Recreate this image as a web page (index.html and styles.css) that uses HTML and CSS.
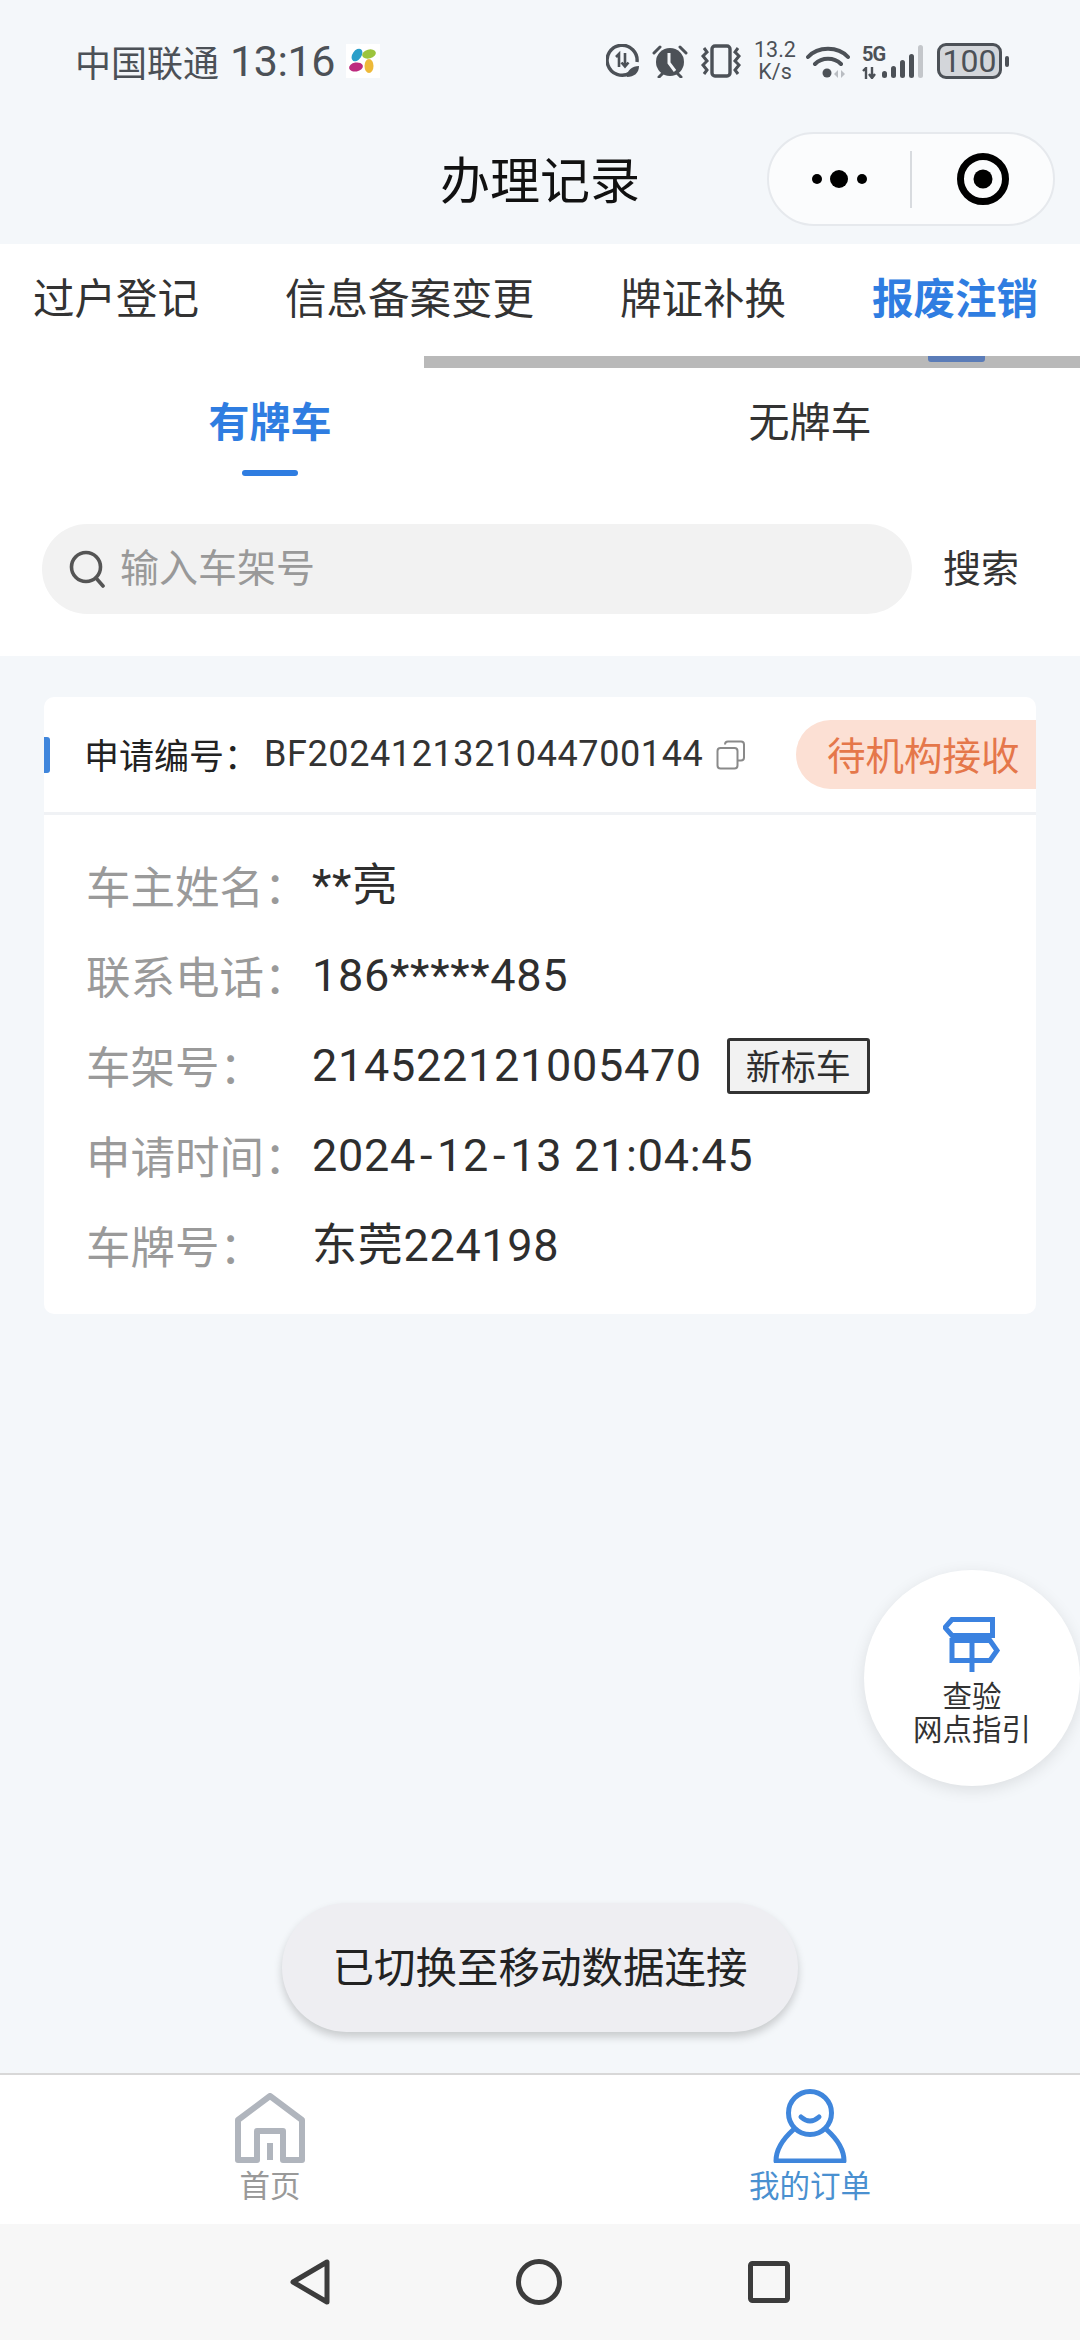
FILE: index.html
```html
<!DOCTYPE html>
<html lang="zh">
<head>
<meta charset="utf-8">
<title>办理记录</title>
<link rel="stylesheet" href="styles.css">
</head>
<body>
<div class="page">
  <header class="status">
    <div class="status-left">
      <span class="carrier">中国联通</span>
      <span class="time">13:16</span>
      <svg class="app-logo" viewBox="0 0 34 34">
        <rect width="34" height="34" fill="#fff"/>
        <ellipse cx="11" cy="11" rx="4.5" ry="7" transform="rotate(35 11 11)" fill="#2b9fc9"/>
        <ellipse cx="23" cy="10" rx="7" ry="4.5" transform="rotate(-15 23 10)" fill="#9cc43c"/>
        <ellipse cx="10" cy="23" rx="7" ry="4.5" transform="rotate(-10 10 23)" fill="#bd2a7e"/>
        <ellipse cx="23" cy="22" rx="4.5" ry="7" fill="#eeb938"/>
      </svg>
    </div>
    <div class="status-right">
      <svg class="ic-data" viewBox="0 0 34 34" fill="none" stroke="#4c5157">
        <path d="M24 29A15 15 0 1 1 31 18" stroke-width="3.4"/>
        <path d="M10 13l3-3v13M19 9v13M15.500 18.500l3.500 4 3.500-4" stroke-width="2.600"/>
        <path d="M21 33c0-7 5-11 12-11 0 7-5 11-12 11z" fill="#4c5157" stroke="none"/>
      </svg>
      <svg class="ic-alarm" viewBox="0 0 36 34" fill="none">
        <circle cx="18" cy="18" r="14" fill="#4c5157"/>
        <path d="M17 9v10l6 8" stroke="#f4f7fa" stroke-width="3"/>
        <path d="M2 9l6-6M34 9l-6-6M7 33l4-4M29 33l-4-4" stroke="#4c5157" stroke-width="3" stroke-linecap="round"/>
      </svg>
      <svg class="ic-vibrate" viewBox="0 0 42 34" fill="none" stroke="#4c5157">
        <rect x="12" y="2" width="18" height="30" rx="3" stroke-width="3.400"/>
        <path d="M4 4l3 4-4 4 4 5-4 4 4 5-3 4M38 4l-3 4 4 4-4 5 4 4-4 5 3 4" stroke-width="3"/>
      </svg>
      <div class="speed"><span>13.2</span><span>K/s</span></div>
      <svg class="ic-wifi" viewBox="0 0 44 34" fill="none" stroke="#4c5157" stroke-width="4" stroke-linecap="round">
        <path d="M2 13C12 2 32 2 42 13M9 20c7-7 19-7 26 0"/>
        <circle cx="21" cy="29" r="4.500" fill="#4c5157" stroke="none"/>
        <path d="M28 30l4-4v8zM35 26l4 4-4 4z" fill="#b9bdc2" stroke="none"/>
      </svg>
      <div class="cell">
        <div class="cell-left">
          <span class="five-g">5G</span>
          <svg class="ic-arrows" viewBox="0 0 15 12" fill="none" stroke="#4c5157" stroke-width="2.400"><path d="M1 4l3-3v11M10 0v11M7 7l3 4 3-4"/></svg>
        </div>
        <svg class="ic-bars" viewBox="0 0 41 34">
          <rect x="0" y="26" width="5" height="7" rx="2.500" fill="#4c5157"/>
          <rect x="9" y="21" width="5" height="12" rx="2.500" fill="#4c5157"/>
          <rect x="18" y="15" width="5" height="18" rx="2.500" fill="#4c5157"/>
          <rect x="27" y="9" width="5" height="24" rx="2.500" fill="#4c5157"/>
          <rect x="36" y="0" width="5" height="33" rx="2.500" fill="#c4c7cb"/>
        </svg>
      </div>
      <div class="battery"><span class="battery-body">100</span><span class="battery-nub"></span></div>
    </div>
  </header>

  <nav class="nav">
    <span></span>
    <h1 class="nav-title">办理记录</h1>
    <div class="capsule">
      <div class="capsule-side">
        <svg class="ic-dots" viewBox="0 0 56 18"><circle cx="5" cy="9" r="5"/><circle cx="27" cy="9" r="9"/><circle cx="50" cy="9" r="5"/></svg>
      </div>
      <span class="capsule-line"></span>
      <div class="capsule-side">
        <svg class="ic-target" viewBox="0 0 52 52"><circle cx="26" cy="26" r="22.500" fill="none" stroke="#000" stroke-width="7"/><circle cx="26" cy="26" r="9.500"/></svg>
      </div>
    </div>
  </nav>

  <section class="top">
    <div class="tabs">
      <span>过户登记</span>
      <span>信息备案变更</span>
      <span>牌证补换</span>
      <span class="tab-on">报废注销</span>
    </div>
    <div class="scrollbar"><span class="scroll-thumb"></span></div>
    <div class="subtabs">
      <div class="subtab subtab-on"><span>有牌车</span><i class="subtab-line"></i></div>
      <div class="subtab"><span>无牌车</span></div>
    </div>
    <div class="search-row">
      <div class="search-box">
        <svg class="ic-search" viewBox="0 0 38 38" fill="none" stroke="#555" stroke-width="3.600"><circle cx="18" cy="17" r="14.500"/><path d="M28 28l7 8" stroke-linecap="round"/></svg>
        <span class="placeholder">输入车架号</span>
      </div>
      <span class="search-btn">搜索</span>
    </div>
  </section>

  <main class="main">
    <article class="card">
      <div class="card-head">
        <i class="marker"></i>
        <span class="no-label">申请编号：</span>
        <span class="no-value">BF2024121321044700144</span>
        <svg class="ic-copy" viewBox="0 0 30 30" fill="none" stroke="#8a8a8a" stroke-width="2"><rect x="1.500" y="8" width="20" height="20.500" rx="3"/><path d="M9 4.500c0-2 1-3 3-3h13c2 0 3 1 3 3v13c0 2-1 3-3 3h-3"/></svg>
        <span class="pill">待机构接收</span>
      </div>
      <dl class="rows">
        <div class="row"><dt>车主姓名：</dt><dd>**亮</dd></div>
        <div class="row"><dt>联系电话：</dt><dd>186*****485</dd></div>
        <div class="row"><dt>车架号：</dt><dd>214522121005470<span class="tag">新标车</span></dd></div>
        <div class="row"><dt>申请时间：</dt><dd>2024<span class="dash">-</span>12<span class="dash">-</span>13 21:04:45</dd></div>
        <div class="row"><dt>车牌号：</dt><dd>东莞224198</dd></div>
      </dl>
    </article>

    <div class="float">
      <svg class="ic-sign" viewBox="0 0 58 55" fill="none" stroke="#3b82e0" stroke-width="5">
        <path d="M9 2.500H49.500V18.500H9L2 10.500z"/>
        <path d="M9 23.500H47L54 33.500 47 43.500H9z"/>
        <path d="M29 19V55"/>
      </svg>
      <span>查验</span>
      <span>网点指引</span>
    </div>

    <div class="toast">已切换至移动数据连接</div>
  </main>

  <footer class="tabbar">
    <div class="bar-item">
      <svg class="ic-home" viewBox="0 0 70 70" fill="none" stroke="#b0b5bd" stroke-width="6" stroke-linejoin="round"><path d="M3 27V67H22V38H48V67H67V27L35 3z"/><path d="M35 50V67"/></svg>
      <span>首页</span>
    </div>
    <div class="bar-item bar-on">
      <svg class="ic-person" viewBox="0 0 74 74" fill="none" stroke="#3f86dc" stroke-width="5" stroke-linecap="round" stroke-linejoin="round"><circle cx="37" cy="24" r="21.500"/><path d="M28 28Q37 36 46 28"/><path d="M20 41C10 50 3 60 3 72H71C71 60 64 50 54 41"/></svg>
      <span>我的订单</span>
    </div>
  </footer>

  <div class="sysnav">
    <svg class="ic-back" viewBox="0 0 40 46" fill="none" stroke="#3c3c3c" stroke-width="5" stroke-linejoin="round"><path d="M37 3V43L3 23z"/></svg>
    <svg class="ic-circle" viewBox="0 0 46 46" fill="none" stroke="#3c3c3c" stroke-width="5"><circle cx="23" cy="23" r="20.500"/></svg>
    <svg class="ic-square" viewBox="0 0 42 42" fill="none" stroke="#3c3c3c" stroke-width="5" stroke-linejoin="round"><rect x="2.500" y="2.500" width="37" height="37" rx="2"/></svg>
  </div>
</div>
</body>
</html>
```
FILE: styles.css
```css
* { box-sizing: border-box; margin: 0; padding: 0; }
html, body { width: 1080px; height: 2340px; overflow: hidden; }
body { background: #f4f7fa; font-family: "Noto Sans CJK SC", sans-serif; color: #333; }
i { display: block; }
svg { display: block; flex: none; }

.page { width: 1080px; height: 2340px; display: flex; flex-direction: column; }

/* status bar */
.status { height: 122px; flex: none; display: flex; justify-content: space-between; align-items: center; padding: 0 71px 0 75px; color: #4c5157; }
.status-left { display: flex; align-items: center; }
.carrier { font-size: 36px; line-height: 44px; }
.time { font-family: Roboto, sans-serif; font-size: 43px; line-height: 44px; margin-left: 11px; letter-spacing: -.4px; }
.app-logo { width: 34px; height: 34px; margin-left: 11px; }
.status-right { display: flex; align-items: center; }
.ic-data { width: 34px; height: 34px; }
.ic-alarm { width: 36px; height: 34px; margin-left: 12px; }
.ic-vibrate { width: 42px; height: 34px; margin-left: 12px; }
.speed { display: flex; flex-direction: column; align-items: center; width: 42px; margin-left: 12px; font-family: Roboto, sans-serif; font-size: 21.500px; line-height: 22px; }
.ic-wifi { width: 44px; height: 34px; margin-left: 10px; }
.cell { display: flex; align-items: flex-end; margin-left: 12px; height: 36px; }
.cell-left { display: flex; flex-direction: column; width: 24px; }
.five-g { font-family: Roboto, sans-serif; font-weight: 700; font-size: 20px; line-height: 20px; letter-spacing: -1px; }
.ic-arrows { width: 15px; height: 12px; margin-top: 3px; }
.ic-bars { width: 41px; height: 34px; margin-left: -4px; }
.battery { display: flex; align-items: center; margin-left: 14px; }
.battery-body { width: 65px; height: 36px; border: 3px solid #4c5157; border-radius: 9px; background: #d3d6da; font-family: Roboto, sans-serif; font-size: 32px; line-height: 30px; text-align: center; }
.battery-nub { width: 4px; height: 11px; margin-left: 3px; border-radius: 2px; background: #4c5157; }

/* nav */
.nav { height: 122px; flex: none; display: grid; grid-template-columns: 1fr auto 1fr; align-items: center; padding: 0 25px 8px; }
.nav-title { font-size: 50px; line-height: 66px; font-weight: 400; color: #111; padding-bottom: 5px; }
.capsule { justify-self: end; width: 288px; height: 94px; display: flex; align-items: center; border: 2px solid #e6e9ed; border-radius: 47px; background: #fbfcfd; }
.capsule-side { flex: 1; display: flex; justify-content: center; align-items: center; }
.capsule-line { width: 2px; height: 57px; background: #d8dbdf; }
.ic-dots { width: 56px; height: 18px; }
.ic-target { width: 52px; height: 52px; }

/* top */
.top { flex: none; background: #fff; padding-bottom: 42px; }
.tabs { height: 112px; display: flex; align-items: center; gap: 86px; padding: 0 0 8px 33px; font-size: 41.500px; line-height: 54px; white-space: nowrap; }
.tab-on { color: #2f7de1; font-weight: 700; }
.scrollbar { height: 12px; margin-left: 424px; background: #b9b9b9; }
.scroll-thumb { display: block; width: 57px; height: 6px; margin-left: 504px; border-radius: 0 0 3px 3px; background: #5b7cb8; }
.subtabs { display: grid; grid-template-columns: 1fr 1fr; height: 108px; padding-top: 27px; font-size: 41px; line-height: 48px; }
.subtab { display: flex; flex-direction: column; align-items: center; }
.subtab-on { color: #2f7de1; font-weight: 700; }
.subtab-line { width: 56px; height: 6px; margin-top: 27px; border-radius: 3px; background: #2f7de1; }
.search-row { display: flex; align-items: center; margin-top: 48px; padding-left: 42px; }
.search-box { width: 870px; height: 90px; display: flex; align-items: center; gap: 14px; padding-left: 26px; border-radius: 45px; background: #f2f2f2; }
.ic-search { width: 38px; height: 38px; }
.placeholder { font-size: 39px; line-height: 50px; color: #999; padding-bottom: 8px; }
.search-btn { margin-left: 31px; font-size: 38px; line-height: 50px; color: #333; padding-bottom: 6px; }

/* main */
.main { flex: 1; position: relative; padding: 41px 44px 0; }
.card { background: #fff; border-radius: 10px; overflow: hidden; }
.card-head { height: 118px; display: flex; align-items: center; border-bottom: 3px solid #f0f2f5; }
.marker { width: 6px; height: 36px; margin-right: 34px; border-radius: 0 3px 3px 0; background: #3f86dc; }
.no-label { width: 180px; font-size: 35px; line-height: 46px; color: #222; padding-bottom: 2px; }
.no-value { font-family: Roboto, sans-serif; font-size: 36px; line-height: 46px; color: #333; letter-spacing: .6px; padding-bottom: 2px; }
.ic-copy { width: 30px; height: 30px; margin-left: 13px; }
.pill { margin-left: auto; width: 240px; height: 69px; padding-left: 31px; border-radius: 35px 0 0 35px; background: #fce0d4; color: #e5774a; font-size: 38.500px; line-height: 67px; white-space: nowrap; }
.rows { padding: 25px 0 24px 42px; }
.row { height: 90px; display: flex; align-items: center; }
.row dt { width: 226px; font-size: 44.500px; line-height: 60px; color: #9a9a9a; }
.row dd { display: flex; align-items: center; padding-top: 2px; font-family: Roboto, "Noto Sans CJK SC", sans-serif; font-size: 45px; line-height: 60px; color: #2e2e2e; letter-spacing: .7px; white-space: pre; }
.dash { padding: 0 4px; }
.tag { margin-left: 25px; width: 143px; height: 56px; border: 3px solid #333; border-radius: 3px; background: #f2f2f2; font-family: "Noto Sans CJK SC", sans-serif; font-size: 35px; line-height: 47px; letter-spacing: 0; text-align: center; }

/* float */
.float { position: absolute; top: 914px; right: 0; width: 216px; height: 216px; display: flex; flex-direction: column; align-items: center; padding-top: 47px; border-radius: 50%; background: #fff; box-shadow: 0 4px 16px rgba(0, 0, 0, .1); font-size: 29.500px; line-height: 33px; color: #333; }
.ic-sign { width: 58px; height: 55px; margin-bottom: 6px; }

/* toast */
.toast { position: absolute; top: 1247px; left: 282px; width: 516px; height: 129px; border-radius: 65px; background: #eeeef2; box-shadow: 0 5px 8px rgba(0, 0, 0, .18); font-size: 41.500px; line-height: 125px; text-align: center; color: #222; }

/* tab bar */
.tabbar { height: 151px; flex: none; display: grid; grid-template-columns: 1fr 1fr; border-top: 2px solid #d8d8d8; background: #fff; }
.bar-item { display: flex; flex-direction: column; align-items: center; justify-content: flex-end; gap: 3px; padding-bottom: 22px; font-size: 30.500px; line-height: 36px; color: #999; }
.bar-on { color: #4a90d0; }
.ic-home { width: 70px; height: 70px; }
.ic-person { width: 74px; height: 74px; }

/* system nav */
.sysnav { height: 116px; flex: none; display: flex; align-items: center; justify-content: center; gap: 186px; background: #f7f7f7; }
.ic-back { width: 40px; height: 46px; }
.ic-circle { width: 46px; height: 46px; }
.ic-square { width: 42px; height: 42px; }
```
